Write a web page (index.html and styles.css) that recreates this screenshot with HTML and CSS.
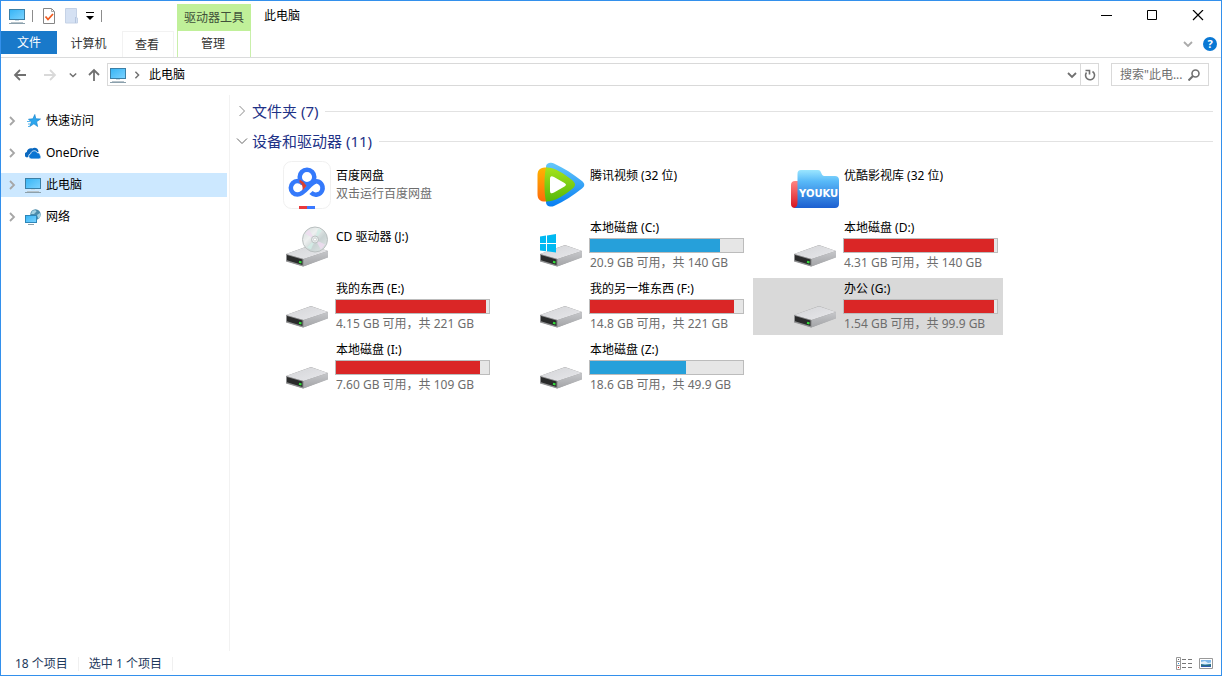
FILE: index.html
```html
<!DOCTYPE html>
<html lang="zh-CN">
  <head>
    <meta charset="utf-8">
    <title>此电脑</title>
    <link rel="stylesheet" href="styles.css">
  </head>
  <body>
    <!-- shared icons -->
    <svg class="sprite" aria-hidden="true">
      <defs>
        <linearGradient id="screen" x1="0" y1="0" x2="1" y2="1">
          <stop offset="0" stop-color="#35b4f5"/>
          <stop offset="1" stop-color="#7dd3ff"/>
        </linearGradient>
        <linearGradient id="driveTop" x1="0" y1="0" x2="1" y2="1">
          <stop offset="0" stop-color="#d3d4d7"/>
          <stop offset="1" stop-color="#e8e8eb"/>
        </linearGradient>
        <linearGradient id="driveSide" x1="0" y1="0" x2="0" y2="1">
          <stop offset="0" stop-color="#c6c7ca"/>
          <stop offset="1" stop-color="#a3a4a7"/>
        </linearGradient>
        <linearGradient id="disc" x1="0" y1="0" x2="1" y2="1">
          <stop offset="0" stop-color="#cfd9d8"/>
          <stop offset=".35" stop-color="#eef0f0"/>
          <stop offset=".6" stop-color="#c9d3d3"/>
          <stop offset="1" stop-color="#e3e8e8"/>
        </linearGradient>
        <linearGradient id="blue" x1="0" y1="0" x2="0" y2="1">
          <stop offset="0" stop-color="#66c8fb"/>
          <stop offset="1" stop-color="#067df2"/>
        </linearGradient>
        <linearGradient id="orange" x1="0" y1="0" x2="0" y2="1">
          <stop offset="0" stop-color="#ffb400"/>
          <stop offset="1" stop-color="#ff6a0c"/>
        </linearGradient>
        <linearGradient id="green" x1="0" y1="0" x2="0" y2="1">
          <stop offset="0" stop-color="#a5e31c"/>
          <stop offset="1" stop-color="#55b80c"/>
        </linearGradient>
        <linearGradient id="folder" x1="0" y1="0" x2="0" y2="1">
          <stop offset="0" stop-color="#9be6ff"/>
          <stop offset=".3" stop-color="#58b9f8"/>
          <stop offset="1" stop-color="#1c5fd0"/>
        </linearGradient>
        <linearGradient id="red" x1="0" y1="0" x2="0" y2="1">
          <stop offset="0" stop-color="#ff8582"/>
          <stop offset="1" stop-color="#d81520"/>
        </linearGradient>
      </defs>
      <symbol id="pc" viewBox="0 0 16 16">
        <rect x=".5" y="1.5" width="15" height="10" fill="url(#screen)" stroke="#3b7fa6"/>
        <path d="M2 14.5h12" stroke="#b8c4cb"/>
        <path d="M0 15.5h16" stroke="#8ba0ac"/>
        <path d="M6 12.5h4" stroke="#c9dbe5"/>
      </symbol>
      <symbol id="chev" viewBox="0 0 8 10">
        <path d="M2 1l4 4-4 4" fill="none" stroke="currentColor" stroke-width="1.8"/>
      </symbol>
      <symbol id="chev-down" viewBox="0 0 10 8">
        <path d="M1 2l4 4 4-4" fill="none" stroke="currentColor" stroke-width="1.8"/>
      </symbol>
      <symbol id="arrow" viewBox="0 0 14 14">
        <path d="M7 2L2 7l5 5M2 7h11" fill="none" stroke="currentColor" stroke-width="1.8"/>
      </symbol>
      <symbol id="drive" viewBox="0 0 48 48">
        <path d="M3 32L28 23l17 6v6l-25 9.500-17-5z" fill="#999"/>
        <path d="M3 32L28 23.200 45 29 20.500 37z" fill="url(#driveTop)"/>
        <path d="M20.500 37L45 29v6.500L20.500 44.500z" fill="url(#driveSide)"/>
        <path d="M3 32l17.500 5v7.500L3 39z" fill="#8e8f91"/>
        <path d="M4 33l15.500 4.600v5.500L4 38.300z" fill="#2a2b2b"/>
        <path d="M16 39.800l2.500.7" stroke="#35e03c" stroke-width="2"/>
      </symbol>
    </svg>

    <div class="window">
      <header class="header">
        <div class="header-left">
          <div class="quick-access">
            <svg class="icon16"><use href="#pc"/></svg>
            <span class="sep"></span>
            <button class="icon-button" aria-label="属性">
              <svg class="icon16" viewBox="0 0 16 16">
                <path d="M3.500.5h8l3 3v12h-11z" fill="#fff" stroke="#858585"/>
                <path d="M11.500.5v3h3" fill="none" stroke="#a5a5a5"/>
                <path d="M5.500 8.500l2.500 3 5-5.500" fill="none" stroke="#f05a1e" stroke-width="1.8"/>
              </svg>
            </button>
            <button class="icon-button" aria-label="新建文件夹">
              <svg class="icon16" viewBox="0 0 16 16">
                <path d="M2.500.5h11v9.500h1v5h-12z" fill="#d5e1f3" stroke="#c5d2e6"/>
                <path d="M12.500 9v6" stroke="#b6c6df"/>
              </svg>
            </button>
            <button class="icon-button" aria-label="自定义快速访问工具栏">
              <svg class="icon8" viewBox="0 0 8 8">
                <path d="M0 .5h8" stroke="#000"/>
                <path d="M0 4h8L4 8z" fill="#000"/>
              </svg>
            </button>
            <span class="sep"></span>
          </div>
          <div class="tabs">
            <button class="tab file">文件</button>
            <button class="tab computer">计算机</button>
            <button class="tab view">查看</button>
          </div>
        </div>
        <div class="context">
          <div class="context-title">驱动器工具</div>
          <button class="context-tab">管理</button>
        </div>
        <h1 class="title">此电脑</h1>
        <div class="header-right">
          <div class="caption">
            <button class="caption-button" aria-label="最小化">
              <svg class="icon12" viewBox="0 0 12 12"><path d="M1 5.500h11" stroke="#000"/></svg>
            </button>
            <button class="caption-button" aria-label="最大化">
              <svg class="icon12" viewBox="0 0 12 12"><path d="M1.500.5h9v9h-9z" fill="none" stroke="#000"/></svg>
            </button>
            <button class="caption-button" aria-label="关闭">
              <svg class="icon12" viewBox="0 0 12 12"><path d="M1 0l10 10M11 0L1 10" stroke="#000" stroke-width="1.200"/></svg>
            </button>
          </div>
          <div class="ribbon-tools">
            <button class="icon-button light" aria-label="展开功能区">
              <svg class="icon10"><use href="#chev-down"/></svg>
            </button>
            <button class="help" aria-label="帮助">?</button>
          </div>
        </div>
      </header>

      <div class="address-row">
        <div class="nav-buttons">
          <button class="nav-button" aria-label="后退"><svg class="icon14"><use href="#arrow"/></svg></button>
          <button class="nav-button off" aria-label="前进"><svg class="icon14 flip"><use href="#arrow"/></svg></button>
          <button class="nav-button recent" aria-label="最近浏览的位置"><svg class="icon8"><use href="#chev-down"/></svg></button>
          <button class="nav-button up" aria-label="向上"><svg class="icon14 turn"><use href="#arrow"/></svg></button>
        </div>
        <div class="address">
          <svg class="icon16"><use href="#pc"/></svg>
          <svg class="icon8 crumb-arrow"><use href="#chev"/></svg>
          <button class="crumb">此电脑</button>
          <button class="address-button" aria-label="以前的位置"><svg class="icon10"><use href="#chev-down"/></svg></button>
          <button class="address-button refresh" aria-label="刷新">
            <svg class="icon12" viewBox="0 0 12 12">
              <path d="M8.500 2.500a4.500 4.500 0 1 1-6 1" fill="none" stroke="currentColor" stroke-width="1.600"/>
              <path d="M1.500 1.500h4v4" fill="none" stroke="currentColor" stroke-width="1.600"/>
            </svg>
          </button>
        </div>
        <label class="search">
          <input type="text" placeholder="搜索&quot;此电..." aria-label="搜索此电脑">
          <svg class="icon12" viewBox="0 0 12 12">
            <circle cx="7.500" cy="4.500" r="3.500" fill="none" stroke="currentColor" stroke-width="1.600"/>
            <path d="M5 7L.5 11.500" stroke="currentColor" stroke-width="2"/>
          </svg>
        </label>
      </div>

      <div class="main">
        <nav class="sidebar">
          <a class="side-item" href="#">
            <svg class="icon10"><use href="#chev"/></svg>
            <svg class="icon16" viewBox="0 0 16 16">
              <path d="M9.800 1.500l1 4.300 4.700.2-3.900 2.700 1 4.800-3.700-2.700-4.100 2.700 1.500-4.500L3.500 6.200l4.400-.4z" fill="#2ba6ee" stroke="#1d86cf" stroke-width=".7"/>
              <path d="M2 8.500h3M3 11h2M3 13.500h2" stroke="#55b4ec"/>
            </svg>
            <span>快速访问</span>
          </a>
          <a class="side-item" href="#">
            <svg class="icon10"><use href="#chev"/></svg>
            <svg class="icon16" viewBox="0 0 16 16">
              <path d="M2 12.500a2.800 2.800 0 0 1-.2-5.500C2 4.500 4.800 2.600 7.200 3.500c3-1.800 6.500.2 6.300 3.500z" fill="#0a68bf"/>
              <path d="M6 14a2.700 2.700 0 0 1-.3-5.300c.4-3.300 5.400-4.100 6.700-.9 2-.2 2.800 1 2.700 2.300 1.500 1.200.9 3.900-1.100 3.900z" fill="#0a75d3" stroke="#fff" stroke-width=".8"/>
            </svg>
            <span>OneDrive</span>
          </a>
          <a class="side-item current" href="#">
            <svg class="icon10"><use href="#chev"/></svg>
            <svg class="icon16"><use href="#pc"/></svg>
            <span>此电脑</span>
          </a>
          <a class="side-item" href="#">
            <svg class="icon10"><use href="#chev"/></svg>
            <svg class="icon16" viewBox="0 0 16 16">
              <circle cx="10.500" cy="5.500" r="5.200" fill="#4b8cac"/>
              <path d="M7 2.500c2-2 4-1.500 4.500 0L9 5 6 5zM12 6l3-2c1 2 .5 4-1.500 6z" fill="#a4d2e3"/>
              <rect x=".5" y="6.500" width="11" height="7" fill="url(#screen)" stroke="#2e86b8"/>
              <path d="M3 15.500h6" stroke="#8ba0ac"/>
            </svg>
            <span>网络</span>
          </a>
        </nav>

        <main class="content">
          <h2 class="group">
            <svg class="icon12 group-icon" viewBox="0 0 12 12"><path d="M3.500 1l5 5-5 5" fill="none" stroke="#8c8c8c"/></svg>
            <span>文件夹 (7)</span>
          </h2>
          <h2 class="group">
            <svg class="icon12 group-icon" viewBox="0 0 12 12"><path d="M1 3.500l5 5 5-5" fill="none" stroke="#666"/></svg>
            <span>设备和驱动器 (11)</span>
          </h2>

          <div class="tiles">
            <a class="tile app" href="#">
              <svg class="icon48" viewBox="0 0 48 48">
                <rect x=".5" y=".5" width="47" height="47" rx="8" fill="#fff" stroke="#f0f0f0"/>
                <g fill="none" stroke="#3479fb" stroke-width="4.500">
                  <circle cx="24" cy="16" r="7.300"/>
                  <path d="M33 20.500C27 21 22 33.500 14.500 33.500a6.700 6.700 0 1 1 0-13.400c2 0 4 1 5.500 2.600"/>
                  <path d="M28 31.500a6.700 6.700 0 1 0 4-11.200"/>
                </g>
                <path d="M16.500 18.500l4 2.500 3 4-4 4.500c.5-4-.5-7-3-8z" fill="#d9402f"/>
                <path d="M16 45h8v3h-8z" fill="#e9383b"/>
                <path d="M24 45h8v3h-8z" fill="#3b79ff"/>
              </svg>
              <div class="tile-text">
                <div>百度网盘</div>
                <div class="note">双击运行百度网盘</div>
              </div>
            </a>
            <a class="tile app" href="#">
              <svg class="icon48" viewBox="0 0 48 48">
                <path d="M9 6c0-4 5-5 8-3.500 10 4.500 19 10.500 28 17.500 3 2.500 3 5 0 7.500C37 34 27 40.500 17 45c-4 1.500-8 0-8-4z" fill="url(#blue)"/>
                <path d="M10 6.500C4 6.500.5 8 .5 14v19c0 6 3 8 9.500 7.500z" fill="url(#orange)"/>
                <path d="M9 6.500c8-.5 18 6 26 12.500 4 3.500 4 6 0 9C28 34 18 40.500 9 40.500c-2-7-2-27 0-34z" fill="url(#green)"/>
                <path d="M13 18c0-3 1.500-3.500 4-2l10.500 6c2 1.200 2 2.300 0 3.500L17 31.500c-2.500 1.500-4 1-4-2z" fill="#fff"/>
              </svg>
              <div class="tile-text"><div>腾讯视频 (32 位)</div></div>
            </a>
            <a class="tile app" href="#">
              <svg class="icon48" viewBox="0 0 48 48">
                <path d="M4 20h6v27H4c-2.500 0-4-1.500-4-4V24c0-2.500 1.500-4 4-4z" fill="url(#red)"/>
                <path d="M10 9h17c2 0 2.500 1 3.500 3.500.8 2 1.500 2.500 4 2.500H44c2.500 0 4 1.500 4 4v24c0 2.500-1.500 4-4 4H3c3-1 3.500-3 3.500-6V13c0-2.500 1-4 3.500-4z" fill="url(#folder)"/>
                <text class="logo-text" x="8" y="36">YOUKU</text>
              </svg>
              <div class="tile-text"><div>优酷影视库 (32 位)</div></div>
            </a>

            <a class="tile app" href="#">
              <svg class="icon48" viewBox="0 0 48 48">
                <use href="#drive"/>
                <circle cx="32" cy="17.500" r="12.500" fill="url(#disc)" stroke="#b9bfbf"/>
                <path d="M32 17.500L22 11.500l4-4zM32 17.500l10 5-4 5z" fill="#efdcf0" opacity=".8"/>
                <path d="M32 17.500l3-11 4 2zM32 17.500l-4 10-4-2z" fill="#d2eee6" opacity=".8"/>
                <circle cx="32" cy="17.500" r="3.500" fill="#e8ecec" stroke="#aab2b2" stroke-width=".7"/>
                <circle cx="32" cy="17.500" r="1.500" fill="#fff" stroke="#aab2b2" stroke-width=".5"/>
              </svg>
              <div class="tile-text"><div>CD 驱动器 (J:)</div></div>
            </a>
            <a class="tile" href="#">
              <svg class="icon48" viewBox="0 0 48 48">
                <use href="#drive"/>
                <path d="M3 14.500l6-.9V21H3zM10 13.400l9-1.400v9h-9zM3 22h6v7.200l-6-.8zM10 22h9v8.500l-9-1.200z" fill="#00b9f2"/>
              </svg>
              <div class="tile-text">
                <div>本地磁盘 (C:)</div>
                <div class="bar"><div class="fill" style="width: 85%"></div></div>
                <div class="note">20.9 GB 可用，共 140 GB</div>
              </div>
            </a>
            <a class="tile" href="#">
              <svg class="icon48"><use href="#drive"/></svg>
              <div class="tile-text">
                <div>本地磁盘 (D:)</div>
                <div class="bar"><div class="fill full" style="width: 98%"></div></div>
                <div class="note">4.31 GB 可用，共 140 GB</div>
              </div>
            </a>

            <a class="tile" href="#">
              <svg class="icon48"><use href="#drive"/></svg>
              <div class="tile-text">
                <div>我的东西 (E:)</div>
                <div class="bar"><div class="fill full" style="width: 98%"></div></div>
                <div class="note">4.15 GB 可用，共 221 GB</div>
              </div>
            </a>
            <a class="tile" href="#">
              <svg class="icon48"><use href="#drive"/></svg>
              <div class="tile-text">
                <div>我的另一堆东西 (F:)</div>
                <div class="bar"><div class="fill full" style="width: 94%"></div></div>
                <div class="note">14.8 GB 可用，共 221 GB</div>
              </div>
            </a>
            <a class="tile selected" href="#">
              <svg class="icon48"><use href="#drive"/></svg>
              <div class="tile-text">
                <div>办公 (G:)</div>
                <div class="bar"><div class="fill full" style="width: 98%"></div></div>
                <div class="note">1.54 GB 可用，共 99.9 GB</div>
              </div>
            </a>

            <a class="tile" href="#">
              <svg class="icon48"><use href="#drive"/></svg>
              <div class="tile-text">
                <div>本地磁盘 (I:)</div>
                <div class="bar"><div class="fill full" style="width: 94%"></div></div>
                <div class="note">7.60 GB 可用，共 109 GB</div>
              </div>
            </a>
            <a class="tile" href="#">
              <svg class="icon48"><use href="#drive"/></svg>
              <div class="tile-text">
                <div>本地磁盘 (Z:)</div>
                <div class="bar"><div class="fill" style="width: 63%"></div></div>
                <div class="note">18.6 GB 可用，共 49.9 GB</div>
              </div>
            </a>
          </div>
        </main>
      </div>

      <footer class="status">
        <span class="status-item">18 个项目</span>
        <span class="status-item">选中 1 个项目</span>
        <div class="view-buttons">
          <button class="icon-button" aria-label="详细信息">
            <svg class="icon16" viewBox="0 0 16 16">
              <path d="M.5 1.500h4v12h-4zM.5 5.500h4M.5 9.500h4" fill="none" stroke="#999"/>
              <path d="M6 3.500h4M12 3.500h4M6 7.500h4M12 7.500h4M6 11.500h4M12 11.500h4" stroke="#777"/>
              <path d="M2 3h1v1H2z" fill="#666"/>
              <path d="M2 7h1v1H2z" fill="#2d8fe0"/>
              <path d="M2 11h1v1H2z" fill="#d22"/>
            </svg>
          </button>
          <button class="icon-button" aria-label="大缩略图">
            <svg class="icon16" viewBox="0 0 16 16">
              <path d="M1.500 2.500h13v10h-13z" fill="#fff" stroke="#999"/>
              <path d="M3 4h10v7H3z" fill="#7fb9ea"/>
              <path d="M3 6l4-1 3 2 3-.5V8H3z" fill="#e1f0fa"/>
              <path d="M3 8l4 1 6-1v3H3z" fill="#2b6f80"/>
              <path d="M3 10h10v1H3z" fill="#2c5cb0"/>
            </svg>
          </button>
        </div>
      </footer>
    </div>
  </body>
</html>
```

FILE: styles.css
```css
* {
  box-sizing: border-box;
}
body {
  margin: 0;
  background: #fff;
  color: #000;
  font-family: "Noto Sans", "Noto Sans CJK SC", sans-serif;
  font-size: 12px;
  line-height: 18px;
}
button {
  padding: 0;
  border: 0;
  background: none;
  color: inherit;
  font: inherit;
}
a {
  color: inherit;
  text-decoration: none;
}
svg {
  display: block;
  flex: none;
}
.sprite {
  position: absolute;
  width: 0;
  height: 0;
}
.icon8 { width: 8px; height: 8px; }
.icon10 { width: 10px; height: 10px; }
.icon12 { width: 12px; height: 12px; }
.icon14 { width: 14px; height: 14px; }
.icon16 { width: 16px; height: 16px; }
.icon48 { width: 48px; height: 48px; }
.flip { transform: scaleX(-1); }
.turn { transform: rotate(90deg); }

.window {
  display: flex;
  flex-direction: column;
  min-height: 100vh;
  border: 1px solid #3390ec;
}

/* title bar and ribbon tabs */
.header {
  display: flex;
  border-bottom: 1px solid #dadbdc;
}
.header-left {
  width: 176px;
}
.quick-access {
  display: flex;
  align-items: center;
  gap: 7px;
  height: 30px;
  padding-left: 8px;
}
.sep {
  width: 1px;
  height: 12px;
  background: #8c8c8c;
}
.icon-button {
  display: flex;
  align-items: center;
  justify-content: center;
}
.light {
  color: #aaa;
}
.tabs {
  display: flex;
  height: 26px;
}
.tab {
  padding-right: 2px;
  color: #333;
}
.file {
  width: 56px;
  height: 23px;
  padding-right: 0;
  background: #1979ca;
  color: #fff;
}
.computer {
  width: 65px;
}
.view {
  width: 52px;
  border: 1px solid #f2f2f2;
  border-bottom: 0;
}
.context {
  display: flex;
  flex-direction: column;
  width: 74px;
  padding-top: 3px;
}
.context-title {
  height: 27px;
  line-height: 27px;
  background: #c0f099;
  color: #41503a;
  text-align: center;
}
.context-tab {
  height: 26px;
  padding-right: 2px;
  border: 1px solid #c9efab;
  border-width: 0 1px;
  color: #333;
}
.title {
  flex: 1;
  margin: 0;
  padding-left: 13px;
  font-size: 12px;
  font-weight: normal;
  line-height: 30px;
}
.caption {
  display: flex;
  height: 30px;
}
.caption-button {
  display: flex;
  align-items: center;
  justify-content: center;
  width: 46px;
}
.ribbon-tools {
  display: flex;
  align-items: center;
  justify-content: flex-end;
  gap: 10px;
  height: 26px;
  padding-right: 4px;
}
.help {
  width: 14px;
  height: 14px;
  border-radius: 50%;
  background: #0a78d4;
  color: #fff;
  font-weight: bold;
  font-size: 11px;
  line-height: 14px;
}

/* address bar */
.address-row {
  display: flex;
  align-items: center;
  height: 33px;
  padding-right: 12px;
}
.nav-buttons {
  display: flex;
  align-items: center;
  width: 106px;
  padding-left: 12px;
  color: #707070;
}
.nav-button {
  width: 14px;
  margin-right: 16px;
}
.nav-button.off {
  margin-right: 12px;
  color: #d9d9d9;
}
.nav-button.recent {
  width: 8px;
  margin-right: 10px;
}
.nav-button.up {
  margin-right: 0;
}
.address {
  display: flex;
  flex: 1;
  align-items: center;
  height: 23px;
  margin-right: 12px;
  padding-left: 2px;
  border: 1px solid #d9d9d9;
  color: #707070;
}
.crumb-arrow {
  margin: 0 8px 0 7px;
}
.crumb {
  flex: 1;
  color: #000;
  text-align: left;
}
.address-button {
  display: flex;
  align-items: center;
  justify-content: center;
  width: 16px;
  height: 21px;
}
.refresh {
  width: 18px;
  border-left: 1px solid #d9d9d9;
}
.search {
  display: flex;
  align-items: center;
  width: 98px;
  height: 23px;
  padding: 0 8px;
  border: 1px solid #d9d9d9;
  color: #707070;
}
.search input {
  flex: 1;
  min-width: 0;
  padding: 0;
  border: 0;
  outline: 0;
  background: none;
  font: inherit;
}
.search input::placeholder {
  color: #707070;
}

/* navigation pane and file list */
.main {
  display: flex;
  flex: 1;
  padding-top: 4px;
}
.sidebar {
  display: flex;
  flex-direction: column;
  gap: 8px;
  width: 229px;
  padding: 14px 2px 0 0;
  border-right: 1px solid #f2f2f2;
}
.side-item {
  display: flex;
  align-items: center;
  height: 24px;
  padding-left: 6px;
}
.side-item .icon10 {
  margin-right: 8px;
  color: #a6a6a6;
}
.side-item .icon16 {
  margin-right: 5px;
}
.side-item.current {
  background: #cce8ff;
}
.content {
  flex: 1;
  padding: 1px 8px 0 6px;
}
.group {
  display: flex;
  align-items: center;
  height: 30px;
  margin: 0;
  color: #1e3287;
  font-size: 15px;
  font-weight: normal;
}
.group::after {
  content: "";
  flex: 1;
  height: 1px;
  margin-left: 7px;
  background: #e2e2e2;
}
.group-icon {
  margin-right: 4px;
}
.tiles {
  display: flex;
  flex-wrap: wrap;
  gap: 4px;
  max-width: 770px;
  padding-left: 9px;
}
.tile {
  display: flex;
  align-items: center;
  width: 250px;
  height: 57px;
  padding-left: 38px;
}
.tile.selected {
  background: #d9d9d9;
}
.tile-text {
  align-self: flex-start;
  margin-left: 4px;
  padding-top: 2px;
}
.app .tile-text {
  padding-top: 11px;
}
.tile-text div:first-child,
.note {
  padding-left: 1px;
}
.note {
  color: #6d6d6d;
}
.tile-text .bar {
  width: 155px;
  height: 15px;
  margin: 1px 0;
  border: 1px solid #bcbcbc;
  background: #e6e6e6;
}
.tile-text .fill {
  height: 100%;
  padding: 0;
  background: #26a0da;
}
.tile-text .full {
  background: #da2626;
}
.logo-text {
  fill: #fff;
  font-family: "DejaVu Sans", sans-serif;
  font-size: 10px;
  font-weight: bold;
}

/* status bar */
.status {
  display: flex;
  align-items: center;
  height: 24px;
  padding: 1px 7px 0 4px;
  color: #1e395b;
}
.status-item {
  padding: 0 10px;
  border-right: 1px solid #f0f0f0;
  line-height: 14px;
}
.view-buttons {
  display: flex;
  gap: 6px;
  margin-left: auto;
}
```
